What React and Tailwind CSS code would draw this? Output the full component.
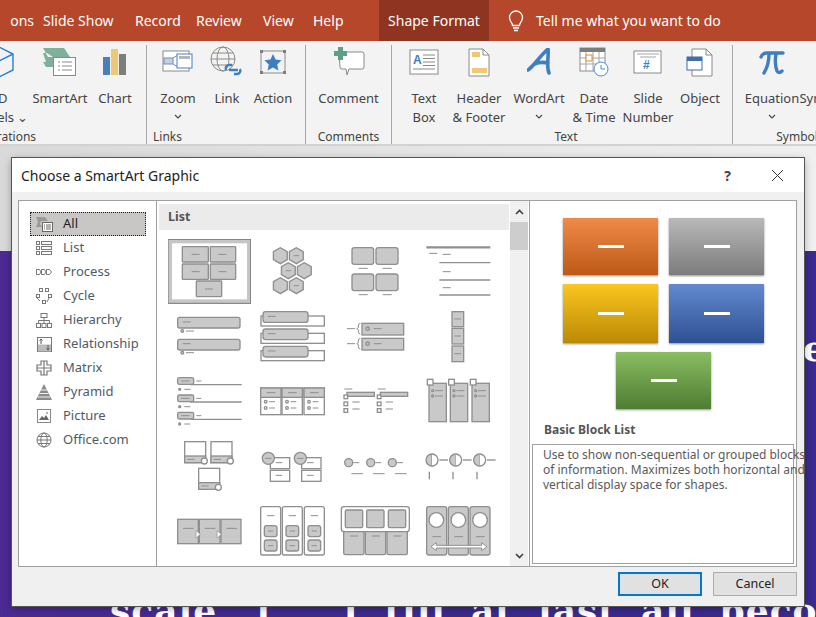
const font = { fontFamily: '"Noto Sans", "Open Sans", sans-serif' };

const tabs = [
  ['ons', 'w-[44px] text-right pr-[9px] -ml-[1px]'],
  ['Slide Show', 'w-[92px]'],
  ['Record', 'w-[61px]'],
  ['Review', 'w-[67px]'],
  ['View', 'w-[50px]'],
  ['Help', 'w-[66px]'],
];

function Tabs() {
  return (
    <div className="flex h-[41px] shrink-0 bg-[#b7472a] text-[14px] text-white items-stretch overflow-hidden">
      {tabs.map(([t, c]) => (
        <div key={t} className={`${c} shrink-0 flex items-center ${t === 'ons' ? 'justify-end' : 'justify-start'}`}>{t}</div>
      ))}
      <div className="w-[110px] shrink-0 bg-[#8f3420] flex items-center justify-center">Shape Format</div>
      <div className="flex items-center ml-[18px] gap-[11px]">
        <svg width="18" height="22" viewBox="0 0 18 22" fill="none" stroke="white" strokeWidth="1.3">
          <path d="M5.5 15.5c0-3-3-4-3-8a6.5 6.5 0 0 1 13 0c0 4-3 5-3 8z" />
          <path d="M6 18h6M7 20.5h4" />
        </svg>
        <span>Tell me what you want to do</span>
      </div>
    </div>
  );
}

function Icon3D() {
  return (
    <svg width="40" height="40" viewBox="0 0 40 40" fill="none" stroke="#2b7cd3" strokeWidth="1.4">
      <path d="M20 5l14 7v16l-14 7-14-7V12zM6 12l14 7 14-7M20 19v16" />
    </svg>
  );
}
function IconSmartArt() {
  return (
    <svg width="34" height="30" viewBox="0 0 34 30">
      <path d="M0 1h21l6 9H10L4 6h-4l3 9H0l3 5h7V10H5z" fill="#7fb09a" />
      <rect x="10.5" y="10.5" width="22" height="18" fill="#fff" stroke="#8a8a8a" />
      <path d="M15 15h2M19 15h10M15 19h2M19 19h10M15 23h2M19 23h10" stroke="#8a8a8a" />
    </svg>
  );
}
function IconChart() {
  return (
    <svg width="26" height="28" viewBox="0 0 26 28">
      <rect x="1" y="9" width="7" height="18" fill="#4a7fbd" />
      <rect x="9" y="1" width="7" height="26" fill="#efc874" />
      <rect x="17" y="6" width="7" height="21" fill="#7d7d7d" />
    </svg>
  );
}
function IconZoom() {
  return (
    <svg width="32" height="24" viewBox="0 0 32 24" fill="none">
      <rect x="1" y="1" width="26" height="20" fill="#fff" stroke="#8a8a8a" />
      <rect x="2" y="8" width="9" height="6" fill="#c3cfe2" stroke="#6f8fb8" />
      <path d="M11 8l5-3M11 14l5 3" stroke="#6f8fb8" />
      <rect x="15" y="4" width="15" height="14" fill="#fff" stroke="#4a7fbd" />
      <rect x="17" y="6" width="11" height="3" fill="#b5b5b5" />
    </svg>
  );
}
function IconLink() {
  return (
    <svg width="34" height="32" viewBox="0 0 34 32" fill="none">
      <circle cx="13" cy="13" r="12" stroke="#8a8a8a" />
      <ellipse cx="13" cy="13" rx="6" ry="12" stroke="#8a8a8a" />
      <path d="M1 13h24M3 7h20M3 19h20" stroke="#8a8a8a" />
      <path d="M18 26a3.5 3.5 0 0 1 3-5h3M32 25a3.5 3.5 0 0 1-3 5h-3M21 26h9" stroke="#3f7fc1" strokeWidth="2.4" transform="translate(-2 -2)" />
    </svg>
  );
}
function IconAction() {
  return (
    <svg width="28" height="26" viewBox="0 0 28 26">
      <rect x="2" y="2" width="24" height="22" fill="none" stroke="#8a8a8a" />
      <path d="M1 1h3v3H1zM24 1h3v3h-3zM1 22h3v3H1zM24 22h3v3h-3z" fill="#7d7d7d" />
      <path d="M14 5l2.6 5.6 6 .7-4.4 4.1 1.2 6-5.4-3-5.4 3 1.2-6-4.4-4.1 6-.7z" fill="#3f7fc1" />
    </svg>
  );
}
function IconComment() {
  return (
    <svg width="32" height="30" viewBox="0 0 32 30">
      <path d="M6 5h23a2 2 0 0 1 2 2v13a2 2 0 0 1-2 2H16l-2 6-1-6H9a2 2 0 0 1-2-2z" fill="#fff" stroke="#8a8a8a" />
      <path d="M5 0h5v4h4v5h-4v4H5V9H1V4h4z" fill="#5f9f86" />
    </svg>
  );
}
function IconTextBox() {
  return (
    <svg width="30" height="26" viewBox="0 0 30 26">
      <rect x="1" y="1" width="28" height="24" fill="#fff" stroke="#8a8a8a" />
      <text x="4" y="15" fontSize="12" fontWeight="700" fill="#3f7fc1" fontFamily="Liberation Sans">A</text>
      <path d="M14 6h12M14 9.5h12M14 13h12M14 16.5h12M4 20h22" stroke="#8a8a8a" />
    </svg>
  );
}
function IconHeader() {
  return (
    <svg width="22" height="29" viewBox="0 0 22 29">
      <path d="M1 1h14l6 6v21H1z" fill="#fff" stroke="#8a8a8a" />
      <path d="M15 1v6h6" fill="none" stroke="#8a8a8a" />
      <rect x="4" y="4" width="8" height="5" fill="#efc874" />
      <rect x="4" y="20" width="15" height="5" fill="#efc874" />
    </svg>
  );
}
function IconWordArt() {
  return (
    <svg width="24" height="28" viewBox="0 0 24 28">
      <path d="M1 22C6 19 13 8 21 1c1 7-2 17 1 24M8 16c4-2 8-2 13-1" fill="none" stroke="#3f7fc1" strokeWidth="3.6" strokeLinecap="round" />
    </svg>
  );
}
function IconDate() {
  return (
    <svg width="30" height="30" viewBox="0 0 30 30">
      <rect x="1" y="1" width="25" height="23" fill="#fff" stroke="#8a8a8a" />
      <rect x="1" y="1" width="25" height="4" fill="#7d7d7d" />
      <path d="M1 11h25M1 17h25M7 5v19M14 5v19M20 5v19" stroke="#a5a5a5" />
      <rect x="7" y="8" width="6" height="6" fill="#fff" stroke="#e08a3c" />
      <circle cx="22" cy="22" r="7" fill="#fff" stroke="#4a8ccb" />
      <path d="M22 18v4h4" fill="none" stroke="#4a8ccb" />
    </svg>
  );
}
function IconSlide() {
  return (
    <svg width="30" height="26" viewBox="0 0 30 26">
      <rect x="1" y="2" width="27" height="22" fill="#fff" stroke="#8a8a8a" />
      <path d="M4 5h22M7 8h16" stroke="#a5a5a5" />
      <text x="10" y="20" fontSize="12" fontWeight="700" fill="#3f7fc1" fontFamily="Liberation Sans">#</text>
    </svg>
  );
}
function IconObject() {
  return (
    <svg width="28" height="29" viewBox="0 0 28 29">
      <path d="M6 1h14l6 6v21H6z" fill="#fff" stroke="#8a8a8a" />
      <path d="M20 1v6h6" fill="none" stroke="#8a8a8a" />
      <rect x="1" y="9" width="15" height="13" fill="#fff" stroke="#3f6fa8" />
      <rect x="1" y="9" width="15" height="4" fill="#3f6fa8" />
    </svg>
  );
}
function IconPi() {
  return (
    <svg width="26" height="25" viewBox="0 0 26 25" fill="none" stroke="#3f7fc1" strokeWidth="3.4" strokeLinecap="round">
      <path d="M2 7c1-3 3-4 6-4h16M10 4C10 12 8 18 5 23M17 4c-1 6-1 12 1 17 1 2 3 2 5 0" />
    </svg>
  );
}

function Chevron() {
  return (
    <svg className="inline-block" width="8" height="5" viewBox="0 0 8 5" fill="none" stroke="#444" strokeWidth="1.1">
      <path d="M1 1l3 3 3-3" />
    </svg>
  );
}

function RibbonButton({ w, icon, lines, chevron, iconClass = '' }) {
  return (
    <div className={`${w} shrink-0 flex flex-col items-center`}>
      <div className={`h-[34px] flex items-center justify-center ${iconClass}`}>{icon}</div>
      <div className="mt-[10px] leading-[19px] text-center whitespace-nowrap">
        {lines.map((l) => <div key={l}>{l}</div>)}
        {chevron && <div className="h-[19px] -mt-[1px] flex justify-center items-center"><Chevron /></div>}
      </div>
    </div>
  );
}

function Group({ label, children, className = '', labelClass = 'text-center' }) {
  return (
    <div className={`${className} shrink-0 flex flex-col h-[100px] border-r border-[#a8a8a8] mt-[4px]`}>
      <div className="flex flex-1">{children}</div>
      <div className={`text-[12px] leading-[16px] ${labelClass}`}>{label}</div>
    </div>
  );
}

function Ribbon() {
  return (
    <div className="flex h-[105px] shrink-0 bg-[#f3f3f3] border-b-2 border-[#d2d2d2] text-[13px] text-[#444] overflow-hidden">
      <Group label="Illustrations" className="w-[178px] -ml-[31px]" labelClass="text-right pr-[113px]">
        <RibbonButton w="w-[60px]" icon={<Icon3D />} lines={['3D', 'Models ⌄']} />
        <RibbonButton w="w-[62px]" icon={<IconSmartArt />} lines={['SmartArt']} />
        <RibbonButton w="w-[48px]" icon={<IconChart />} lines={['Chart']} />
      </Group>
      <Group label="Links" className="w-[159px] pl-[6px]" labelClass="pr-[2px]">
        <RibbonButton w="w-[50px]" icon={<IconZoom />} lines={['Zoom']} chevron />
        <RibbonButton w="w-[48px]" icon={<IconLink />} lines={['Link']} />
        <RibbonButton w="w-[44px]" icon={<IconAction />} lines={['Action']} />
      </Group>
      <Group label="Comments" className="w-[86px]">
        <RibbonButton w="w-[85px]" icon={<IconComment />} lines={['Comment']} />
      </Group>
      <Group label="Text" className="w-[341px] pl-[8px]">
        <RibbonButton w="w-[48px]" icon={<IconTextBox />} lines={['Text', 'Box']} />
        <RibbonButton w="w-[62px]" icon={<IconHeader />} lines={['Header', '& Footer']} />
        <RibbonButton w="w-[58px]" icon={<IconWordArt />} lines={['WordArt']} chevron />
        <RibbonButton w="w-[52px]" icon={<IconDate />} lines={['Date', '& Time']} />
        <RibbonButton w="w-[56px]" icon={<IconSlide />} lines={['Slide', 'Number']} />
        <RibbonButton w="w-[48px]" icon={<IconObject />} lines={['Object']} />
      </Group>
      <div className="w-[134px] shrink-0 flex flex-col h-[100px] mt-[4px] pl-[11px]">
        <div className="flex flex-1">
          <RibbonButton w="w-[56px]" icon={<IconPi />} lines={['Equation']} chevron />
          <RibbonButton w="w-[44px]" icon={<div className="w-[20px]" />} lines={['Symbol']} />
        </div>
        <div className="text-[12px] leading-[16px] text-center -ml-[11px]">Symbols</div>
      </div>
    </div>
  );
}

// slide behind the dialog: only the right edge and the last line peek out
function Slide() {
  const serif = { fontFamily: '"DejaVu Serif", serif' };
  return (
    <div className="flex-1 flex flex-col min-h-0 overflow-hidden">
      <div className="h-[105px] shrink-0 bg-gradient-to-r from-[#d9d9d9] to-[#f0f0f0]" />
      <div className="flex-1 relative overflow-hidden bg-gradient-to-r from-[#4b2a94] via-[#3c2a8c] to-[#3b2a8f] text-white font-bold" style={serif}>
        <div className="flex flex-col items-end text-[36px] leading-[50px] pt-[72px] -mr-[30px]">
          <div>es</div>
          <div>r</div>
          <div>z</div>
          <div className="mt-[10px]">e</div>
        </div>
        <div className="absolute left-[110px] top-[337px] whitespace-nowrap text-[36px] leading-[44px] tracking-[1px] w-[760px] flex gap-[25px]">
          <span>scale.</span><span>[. . .]</span><span>till</span><span>at</span><span>last</span><span>all</span><span>become</span>
        </div>
      </div>
    </div>
  );
}

const catIcons = {
  All: <svg width="17" height="15" viewBox="0 0 17 15"><path d="M0 0h9l3 4H5l-1 3 2 3H0l2-5z" fill="#9a9a9a" /><rect x="6.5" y="5.5" width="10" height="9" fill="#fff" stroke="#666" /><path d="M8 8h1M10 8h5M8 10h1M10 10h5M8 12h1M10 12h5" stroke="#666" /></svg>,
  List: <svg width="16" height="14" viewBox="0 0 16 14" fill="none" stroke="#777"><rect x="0.5" y="0.5" width="3" height="3" /><rect x="5.5" y="0.5" width="10" height="3" /><rect x="0.5" y="5.5" width="3" height="3" /><rect x="5.5" y="5.5" width="10" height="3" /><rect x="0.5" y="10.5" width="3" height="3" /><rect x="5.5" y="10.5" width="10" height="3" /></svg>,
  Process: <svg width="16" height="6" viewBox="0 0 16 6" fill="none" stroke="#777"><path d="M.5.5h3l1.5 2.5L3.5 5.5h-3zM5.5.5h3L10 3 8.500 5.500h-3zM10.500.5h3L15.500 3l-2 2.500h-3z" /></svg>,
  Cycle: <svg width="16" height="16" viewBox="0 0 16 16" fill="none" stroke="#777"><rect x="3.500" y=".5" width="3" height="3" /><rect x="9.500" y=".5" width="3" height="3" /><rect x="12.500" y="6.500" width="3" height="3" /><rect x="6.500" y="12.500" width="3" height="3" /><rect x=".5" y="6.500" width="3" height="3" /><path d="M1 10l3 3M13 10l-2 4" /></svg>,
  Hierarchy: <svg width="16" height="15" viewBox="0 0 16 15" fill="none" stroke="#777"><rect x="5" y=".5" width="6" height="4" /><path d="M8 4.500v3M2.500 10V7.500h11V10M8 7.500V10" /><rect x=".5" y="10.500" width="4" height="4" /><rect x="6" y="10.500" width="4" height="4" /><rect x="11.500" y="10.500" width="4" height="4" /></svg>,
  Relationship: <svg width="15" height="15" viewBox="0 0 15 15"><rect x=".5" y=".5" width="14" height="14" fill="#fff" stroke="#777" /><rect x="1" y="7.500" width="13" height="7" fill="#bbb" /><path d="M4 7V2M2.500 3.500L4 2l1.500 1.500M11 8v5M9.500 11.500L11 13l1.500-1.500" fill="none" stroke="#555" /></svg>,
  Matrix: <svg width="16" height="16" viewBox="0 0 16 16" fill="none" stroke="#777" strokeWidth="1.200"><path d="M5 1h6v4h4v6h-4v4H5v-4H1V5h4zM8 1v14M1 8h14" /></svg>,
  Pyramid: <svg width="16" height="16" viewBox="0 0 16 16"><path d="M8 0l8 16H0z" fill="#8a8a8a" /><path d="M5 6h6M3.500 9.500h9M2 13h12" stroke="#f3f3f3" /></svg>,
  Picture: <svg width="14" height="14" viewBox="0 0 14 14"><rect x=".5" y=".5" width="13" height="13" fill="#fff" stroke="#888" /><path d="M2 11l3-4 2 2 2-3 3 5z" fill="#666" /><circle cx="10" cy="4" r="1" fill="#999" /></svg>,
  'Office.com': <svg width="16" height="16" viewBox="0 0 16 16" fill="none" stroke="#777"><circle cx="8" cy="8" r="7" /><ellipse cx="8" cy="8" rx="3.200" ry="7" /><path d="M1 8h14M2 4.500h12M2 11.500h12" /></svg>,
};

function Categories() {
  return (
    <div className="w-[137px] shrink-0 pt-[11px] pl-[11px] pr-[10px] text-[13px] text-[#4f5a68]">
      {Object.keys(catIcons).map((name) => (
        <div
          key={name}
          className={`h-[24px] flex items-center ${name === 'All' ? 'bg-[#c9c7c5] border border-dotted border-[#222] text-[#222]' : 'border border-transparent'}`}
        >
          <span className="w-[32px] shrink-0 flex justify-center pl-[1px] pr-[7px]">{catIcons[name]}</span>
          <span>{name}</span>
        </div>
      ))}
    </div>
  );
}

// Thumbnail pieces. Their coordinates are 3x screen pixels.
const G = '#c9c9c9';
const S = '#8f8f8f';
function B({ x, y, w, h, r = 2, fill = G }) {
  return <rect x={x} y={y} width={w} height={h} rx={r} fill={fill} stroke={S} strokeWidth="4" />;
}
function D({ x, y, w = 24, c = '#8f8f8f', t = 3 }) {
  return <rect x={x} y={y - t / 2} width={w} height={t} fill={c} />;
}
function Ln({ x1, y1, x2, y2, t = 4 }) {
  return <line x1={x1} y1={y1} x2={x2} y2={y2} stroke={S} strokeWidth={t} />;
}
function Hex({ cx, cy }) {
  const r = 24;
  const pts = [0, 60, 120, 180, 240, 300].map((a) => {
    const rad = ((a + 30) * Math.PI) / 180;
    return `${cx + r * Math.cos(rad)},${cy + r * Math.sin(rad)}`;
  });
  return <polygon points={pts.join(' ')} fill={G} stroke={S} strokeWidth="4" />;
}
function Cir({ cx, cy, r, fill = 'white' }) {
  return <circle cx={cx} cy={cy} r={r} fill={fill} stroke={S} strokeWidth="4" />;
}
function Half({ cx, cy }) {
  return (
    <g>
      <path d={`M${cx} ${cy - 18}a18 18 0 0 0 0 36z`} fill={G} stroke={S} strokeWidth="4" />
      <path d={`M${cx} ${cy - 18}a18 18 0 0 1 0 36`} fill="white" stroke={S} strokeWidth="4" />
      <Ln x1={cx + 22} y1={cy} x2={cx + 48} y2={cy} />
      <Ln x1={cx - 8} y1={cy + 35} x2={cx - 8} y2={cy + 58} />
    </g>
  );
}

const thumbs = [
  // row 1
  <g key="a">
    <rect x="39" y="124" width="237" height="180" fill="white" stroke="#c8c6c4" strokeWidth="12" />
    <rect x="33" y="118" width="248" height="192" fill="none" stroke="#777" strokeWidth="3" />
    <B x={76} y={140} w={78} h={46} /><B x={160} y={140} w={76} h={46} />
    <B x={76} y={192} w={78} h={46} /><B x={160} y={192} w={76} h={46} />
    <B x={118} y={243} w={76} h={47} />
    <D x={104} y={163} /><D x={184} y={163} /><D x={104} y={215} /><D x={184} y={215} /><D x={144} y={267} />
  </g>,
  <g key="b">
    <Hex cx={370} cy={167} /><Hex cx={418} cy={167} /><Hex cx={394} cy={212} /><Hex cx={442} cy={212} /><Hex cx={370} cy={257} /><Hex cx={418} cy={257} />
    <D x={410} y={167} w={16} /><D x={386} y={212} w={16} /><D x={410} y={257} w={16} />
  </g>,
  <g key="c">
    <B x={585} y={143} w={65} h={50} r={7} /><B x={657} y={143} w={66} h={50} r={7} />
    <B x={585} y={222} w={65} h={50} r={7} /><B x={657} y={222} w={66} h={50} r={7} />
    <D x={605} y={205} w={27} /><D x={677} y={205} w={27} /><D x={605} y={284} w={27} /><D x={677} y={284} w={27} />
  </g>,
  <g key="d">
    <Ln x1={808} y1={142} x2={1000} y2={142} t={7} />
    <D x={817} y={160} /><D x={857} y={163} />
    <Ln x1={847} y1={188} x2={1000} y2={188} />
    <D x={857} y={215} />
    <Ln x1={847} y1={240} x2={1000} y2={240} />
    <D x={857} y={263} />
    <Ln x1={847} y1={285} x2={1000} y2={285} />
  </g>,
  // row 2
  <g key="e">
    <B x={62} y={352} w={187} h={32} r={6} /><D x={77} y={366} />
    <Cir cx={76} cy={393} r={4} fill={G} /><D x={87} y={393} />
    <B x={62} y={418} w={187} h={32} r={6} /><D x={77} y={431} />
    <Cir cx={76} cy={458} r={4} fill={G} /><D x={87} y={458} />
  </g>,
  <g key="f">
    {[0, 52, 104].map((o) => (
      <g key={o}>
        <rect x="312" y={348 + o} width="190" height="30" fill="white" stroke={S} strokeWidth="4" />
        <B x={318} y={335 + o} w={135} h={32} r={8} />
        <D x={332} y={349 + o} />
      </g>
    ))}
  </g>,
  <g key="g">
    {[0, 45].map((o) => (
      <g key={o}>
        <D x={570} y={386 + o} />
        <path d={`M610 ${370 + o}q-6 0-6 8v5l-5 3 5 3v5q0 8 6 8`} fill="none" stroke={S} strokeWidth="3" />
        <B x={615} y={370 + o} w={125} h={35} r={0} />
        <Cir cx={632} cy={386 + o} r={5} fill={G} />
        <D x={650} y={386 + o} />
      </g>
    ))}
  </g>,
  <g key="h">
    <B x={885} y={335} w={35} h={45} r={0} /><B x={885} y={385} w={35} h={47} r={0} /><B x={885} y={438} w={35} h={47} r={0} />
    <D x={892} y={357} w={20} /><D x={892} y={408} w={20} /><D x={892} y={461} w={20} />
  </g>,
  // row 3
  <g key="i">
    {[-7, 45, 97].map((y) => (
      <g key={y}>
        <Ln x1={100} y1={y + 21} x2={254} y2={y + 21} />
        <B x={62} y={y} w={48} h={20} r={5} />
        <D x={72} y={y + 10} w={26} /><D x={118} y={y + 10} w={15} />
        <Cir cx={68} cy={y + 35} r={3} fill={G} /><D x={82} y={y + 35} w={18} />
      </g>
    ))}
  </g>,
  <g key="j">
    {[311, 375, 441].map((x) => (
      <g key={x}>
        <rect x={x} y="24" width="61" height="80" fill="white" stroke={S} strokeWidth="4" />
        <rect x={x} y="24" width="61" height="28" fill={G} stroke={S} strokeWidth="4" />
        <D x={x + 18} y={38} w={26} />
        <Cir cx={x + 15} cy={65} r={4} /><D x={x + 26} y={65} w={17} />
        <Cir cx={x + 15} cy={84} r={4} /><D x={x + 26} y={84} w={17} />
      </g>
    ))}
  </g>,
  <g key="k">
    {[0, 100].map((o) => (
      <g key={o}>
        <D x={562 + o} y={27} />
        <B x={570 + o} y={37} w={82} h={12} r={0} />
        <rect x={561 + o} y="45" width="11" height="11" fill="white" stroke={S} strokeWidth="4" />
        <rect x={561 + o} y="66" width="11" height="11" fill="white" stroke={S} strokeWidth="4" />
        <rect x={561 + o} y="86" width="11" height="11" fill="white" stroke={S} strokeWidth="4" />
        <D x={586 + o} y={66} w={22} /><D x={586 + o} y={87} w={22} />
      </g>
    ))}
  </g>,
  <g key="l">
    {[816, 880, 945].map((x) => (
      <g key={x}>
        <B x={x} y={10} w={52} h={115} r={0} />
        <rect x={x - 5} y="-2" width="17" height="17" fill="white" stroke={S} strokeWidth="4" />
        <Cir cx={x + 11} cy={32} r={3} /><D x={x + 18} y={32} w={24} />
        <Cir cx={x + 11} cy={48} r={3} /><D x={x + 18} y={48} w={24} />
      </g>
    ))}
  </g>,
  // row 4
  <g key="m">
    {[[83, 185, 142, 243], [162, 185, 220, 243], [125, 265, 184, 322]].map(([x, y, cx, cy]) => (
      <g key={x}>
        <rect x={x} y={y} width="63" height="63" fill="white" stroke={S} strokeWidth="4" />
        <rect x={x} y={y + 43} width="63" height="20" fill={G} stroke={S} strokeWidth="4" />
        <D x={x + 8} y={y + 53} w={22} />
        <Cir cx={cx} cy={cy} r={9} />
      </g>
    ))}
  </g>,
  <g key="n">
    {[[340, 334], [434, 430]].map(([x, cx]) => (
      <g key={x}>
        <rect x={x} y="233" width="58" height="33" fill="white" stroke={S} strokeWidth="4" />
        <rect x={x} y="271" width="58" height="33" fill="white" stroke={S} strokeWidth="4" />
        <D x={x + 16} y={248} w={20} /><D x={x + 16} y={286} w={20} />
        <Cir cx={cx} cy={235} r={18} fill={G} />
        <D x={cx - 10} y={235} w={20} />
      </g>
    ))}
  </g>,
  <g key="o">
    {[[575, 583], [641, 648], [706, 714]].map(([cx, x]) => (
      <g key={cx}>
        <Cir cx={cx} cy={248} r={12} fill={G} />
        <D x={cx + 14} y={248} w={18} />
        <D x={x} y={281} w={35} />
      </g>
    ))}
  </g>,
  <g key="p"><Half cx={825} cy={240} /><Half cx={896} cy={240} /><Half cx={968} cy={240} /></g>,
  // row 5
  <g key="q">
    {[[62, 62], [127, 62], [192, 60]].map(([x, w]) => (
      <g key={x}><B x={x} y={418} w={w} h={73} r={0} /><D x={x + 16} y={445} w={32} /></g>
    ))}
    <path d="M117 452l13 11-13 11zM180 452l13 11-13 11z" fill="white" stroke={S} strokeWidth="2" />
  </g>,
  <g key="r">
    {[311, 376, 442].map((x) => (
      <g key={x}>
        <rect x={x} y="380" width="60" height="145" rx="6" fill="white" stroke={S} strokeWidth="4" />
        <D x={x + 19} y={407} w={22} />
        <B x={x + 11} y={437} w={38} h={33} r={7} /><D x={x + 22} y={453} w={16} />
        <B x={x + 11} y={480} w={38} h={33} r={7} /><D x={x + 22} y={497} w={16} />
      </g>
    ))}
  </g>,
  <g key="s">
    {[560, 625, 690].map((x) => (
      <g key={x}><B x={x} y={452} w={61} h={72} r={5} /><D x={x + 19} y={468} w={24} /></g>
    ))}
    <rect x="553" y="380" width="204" height="75" rx="8" fill="white" stroke={S} strokeWidth="4" />
    {[565, 629, 694].map((x) => <B key={x} x={x} y={390} w={52} h={53} r={4} />)}
  </g>,
  <g key="t">
    {[[809, 838], [874, 904], [939, 969]].map(([x, cx]) => (
      <g key={x}>
        <B x={x} y={380} w={60} h={145} r={7} />
        <Cir cx={cx} cy={420} r={22} />
        <D x={cx - 12} y={470} w={26} />
      </g>
    ))}
    <path d="M822 500l16-12v8h136v-8l16 12-16 12v-8H838v8z" fill="white" stroke={S} strokeWidth="3" />
  </g>,
];

function Gallery() {
  return (
    <div className="w-[374px] shrink-0 flex border-l border-r border-[#a0a0a0] bg-white">
      <div className="w-[352px] shrink-0 pt-[3px] pl-[2px]">
        <div className="h-[26px] bg-[#ebebeb] flex items-center pl-[9px] text-[12.500px] font-bold text-[#555]">List</div>
        <div className="grid grid-cols-[repeat(4,83px)] auto-rows-[65px] ml-[9px] mt-[9px] overflow-hidden">
          {thumbs.map((t, i) => {
            const c = i % 4;
            const r = Math.floor(i / 4);
            const x0 = c * 249 + 33;
            const y0 = r < 2 ? r * 195 + 117 : r * 195 + 117 - 540;
            return (
              <svg key={i} width="83" height="65" viewBox={`${x0} ${y0} 249 195`} className="block">
                {t}
              </svg>
            );
          })}
        </div>
      </div>
      <div className="w-[18px] shrink-0 ml-[1px] bg-[#f0f0f0] flex flex-col items-center">
        <div className="h-[21px] flex items-center">
          <svg width="9" height="6" viewBox="0 0 9 6" fill="none" stroke="#444" strokeWidth="1.700"><path d="M1 5l3.500-3.500L8 5" /></svg>
        </div>
        <div className="w-full h-[28px] bg-[#cdcdcd]" />
        <div className="flex-1" />
        <div className="h-[21px] flex items-center">
          <svg width="9" height="6" viewBox="0 0 9 6" fill="none" stroke="#444" strokeWidth="1.700"><path d="M1 1l3.500 3.500L8 1" /></svg>
        </div>
      </div>
    </div>
  );
}

function PreviewBlock({ className }) {
  return (
    <div className={`w-[95px] flex items-center justify-center shadow-[0_1px_2px_rgba(0,0,0,0.45)] bg-gradient-to-b ${className}`}>
      <div className="w-[26px] h-[3px] bg-white" />
    </div>
  );
}

function Preview() {
  return (
    <div className="flex-1 flex flex-col min-w-0">
      <div className="flex flex-col items-center gap-[9px] pt-[17px] pl-[1px]">
        <div className="flex gap-[11px]">
          <PreviewBlock className="h-[57px] from-[#f08a48] to-[#bd5a14]" />
          <PreviewBlock className="h-[57px] from-[#b9b9b9] to-[#7c7c7c]" />
        </div>
        <div className="flex gap-[11px]">
          <PreviewBlock className="h-[59px] from-[#fbc61f] to-[#bb8a04]" />
          <PreviewBlock className="h-[59px] from-[#6389cf] to-[#2e5193]" />
        </div>
        <PreviewBlock className="h-[57px] from-[#8bbd62] to-[#4f7d33]" />
      </div>
      <div className="mt-[13px] pl-[14px] text-[12px] leading-[16px] font-bold text-[#555]">Basic Block List</div>
      <div className="mx-[2px] mb-[2px] mt-[6px] flex-1 border border-[#a0a0a0] px-[10px] py-[2px] text-[12px] leading-[15px] text-[#5a5a5a]">
        <div className="whitespace-nowrap">Use to show non-sequential or grouped blocks</div>
        <div className="whitespace-nowrap">of information. Maximizes both horizontal and</div>
        <div className="whitespace-nowrap">vertical display space for shapes.</div>
      </div>
    </div>
  );
}

function Dialog() {
  return (
    <div className="absolute left-[12px] top-[158px] w-[792px] h-[448px] flex flex-col bg-[#f0f0f0] outline outline-1 outline-[#555] shadow-[0_2px_8px_rgba(0,0,0,0.35)] text-[#333]">
      <div className="h-[34px] shrink-0 bg-white flex items-center pl-[9px] text-[14px] text-[#222]">
        <span className="flex-1">Choose a SmartArt Graphic</span>
        <span className="font-bold text-[14px] mr-[40px] text-[#444]">?</span>
        <svg className="mr-[20px]" width="13" height="13" viewBox="0 0 13 13" stroke="#333"><path d="M1 1l11 11M12 1L1 12" /></svg>
      </div>
      <div className="mx-[6px] mt-[8px] h-[367px] w-[779px] flex bg-white border border-[#a0a0a0]">
        <Categories />
        <Gallery />
        <Preview />
      </div>
      <div className="flex justify-end gap-[11px] mt-[5px] pr-[7px] text-[12.500px] text-[#222]">
        <div className="w-[84px] h-[24px] flex items-center justify-center bg-[#e1e1e1] border-2 border-[#0078d7]">OK</div>
        <div className="w-[84px] h-[24px] flex items-center justify-center bg-[#e1e1e1] border border-[#adadad]">Cancel</div>
      </div>
    </div>
  );
}

export default function App() {
  return (
    <div className="relative w-[816px] h-[617px] overflow-hidden flex flex-col bg-[#e6e6e6]" style={font}>
      <Tabs />
      <Ribbon />
      <Slide />
      <Dialog />
    </div>
  );
}
